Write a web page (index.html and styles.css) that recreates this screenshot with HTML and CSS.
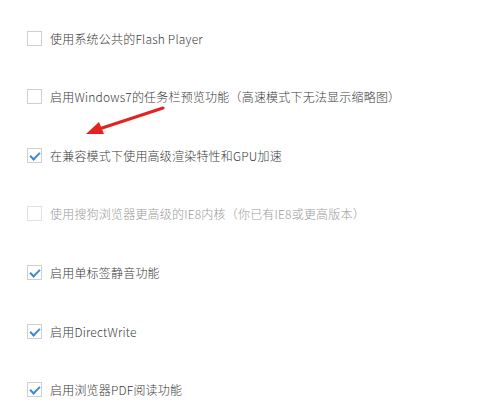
FILE: index.html
```html
<!DOCTYPE html>
<html lang="zh-CN">
<head>
    <meta charset="UTF-8">
    <meta name="viewport" content="width=device-width, initial-scale=1.0">
    <title>设置</title>
    <link rel="stylesheet" href="styles.css">
</head>
<body>
    <div class="options">
        <label class="option">
            <span class="box"></span>
            <span class="label-text">使用系统公共的Flash Player</span>
        </label>
        <label class="option">
            <span class="box"></span>
            <span class="label-text">启用Windows7的任务栏预览功能（高速模式下无法显示缩略图）</span>
        </label>
        <label class="option">
            <span class="box checked"></span>
            <span class="label-text">在兼容模式下使用高级渲染特性和GPU加速</span>
        </label>
        <label class="option disabled">
            <span class="box"></span>
            <span class="label-text">使用搜狗浏览器更高级的IE8内核（你已有IE8或更高版本）</span>
        </label>
        <label class="option">
            <span class="box checked"></span>
            <span class="label-text">启用单标签静音功能</span>
        </label>
        <label class="option">
            <span class="box checked"></span>
            <span class="label-text">启用DirectWrite</span>
        </label>
        <label class="option">
            <span class="box checked"></span>
            <span class="label-text">启用浏览器PDF阅读功能</span>
        </label>
    </div>

    <!-- 红色箭头标注 -->
    <svg class="arrow" width="477" height="407" viewBox="0 0 477 407">
        <line x1="163" y1="108" x2="96" y2="130" stroke="#e32222" stroke-width="3" stroke-linecap="round"/>
        <polygon points="86,134 99,122 104,134" fill="#e32222"/>
    </svg>
</body>
</html>
```

FILE: styles.css
```css
body {
    margin: 0;
    padding: 8.7px 0 0 27px;
    background: #fff;
    font-family: "Noto Sans CJK SC", "Noto Sans", sans-serif;
    font-size: 12px;
    font-weight: 300;
    letter-spacing: 0.2px;
    color: #3a3a3a;
    position: relative;
}

.options {
    display: flex;
    flex-direction: column;
}

.option {
    display: flex;
    align-items: center;
    height: 58.67px;
    gap: 8px;
}

.box {
    width: 13px;
    height: 13px;
    border: 1px solid #cfcfcf;
    background: #fff;
    position: relative;
    flex-shrink: 0;
}

.box.checked::after {
    content: "";
    position: absolute;
    left: 4px;
    top: 1px;
    width: 4px;
    height: 8px;
    border: solid #3c8ad8;
    border-width: 0 2px 2px 0;
    transform: rotate(45deg);
}

.label-text {
    white-space: nowrap;
}

.option.disabled {
    color: #9a9a9a;
}

.option.disabled .box {
    border-color: #e0e0e0;
}

.arrow {
    position: absolute;
    left: 0;
    top: 0;
    pointer-events: none;
}
```
